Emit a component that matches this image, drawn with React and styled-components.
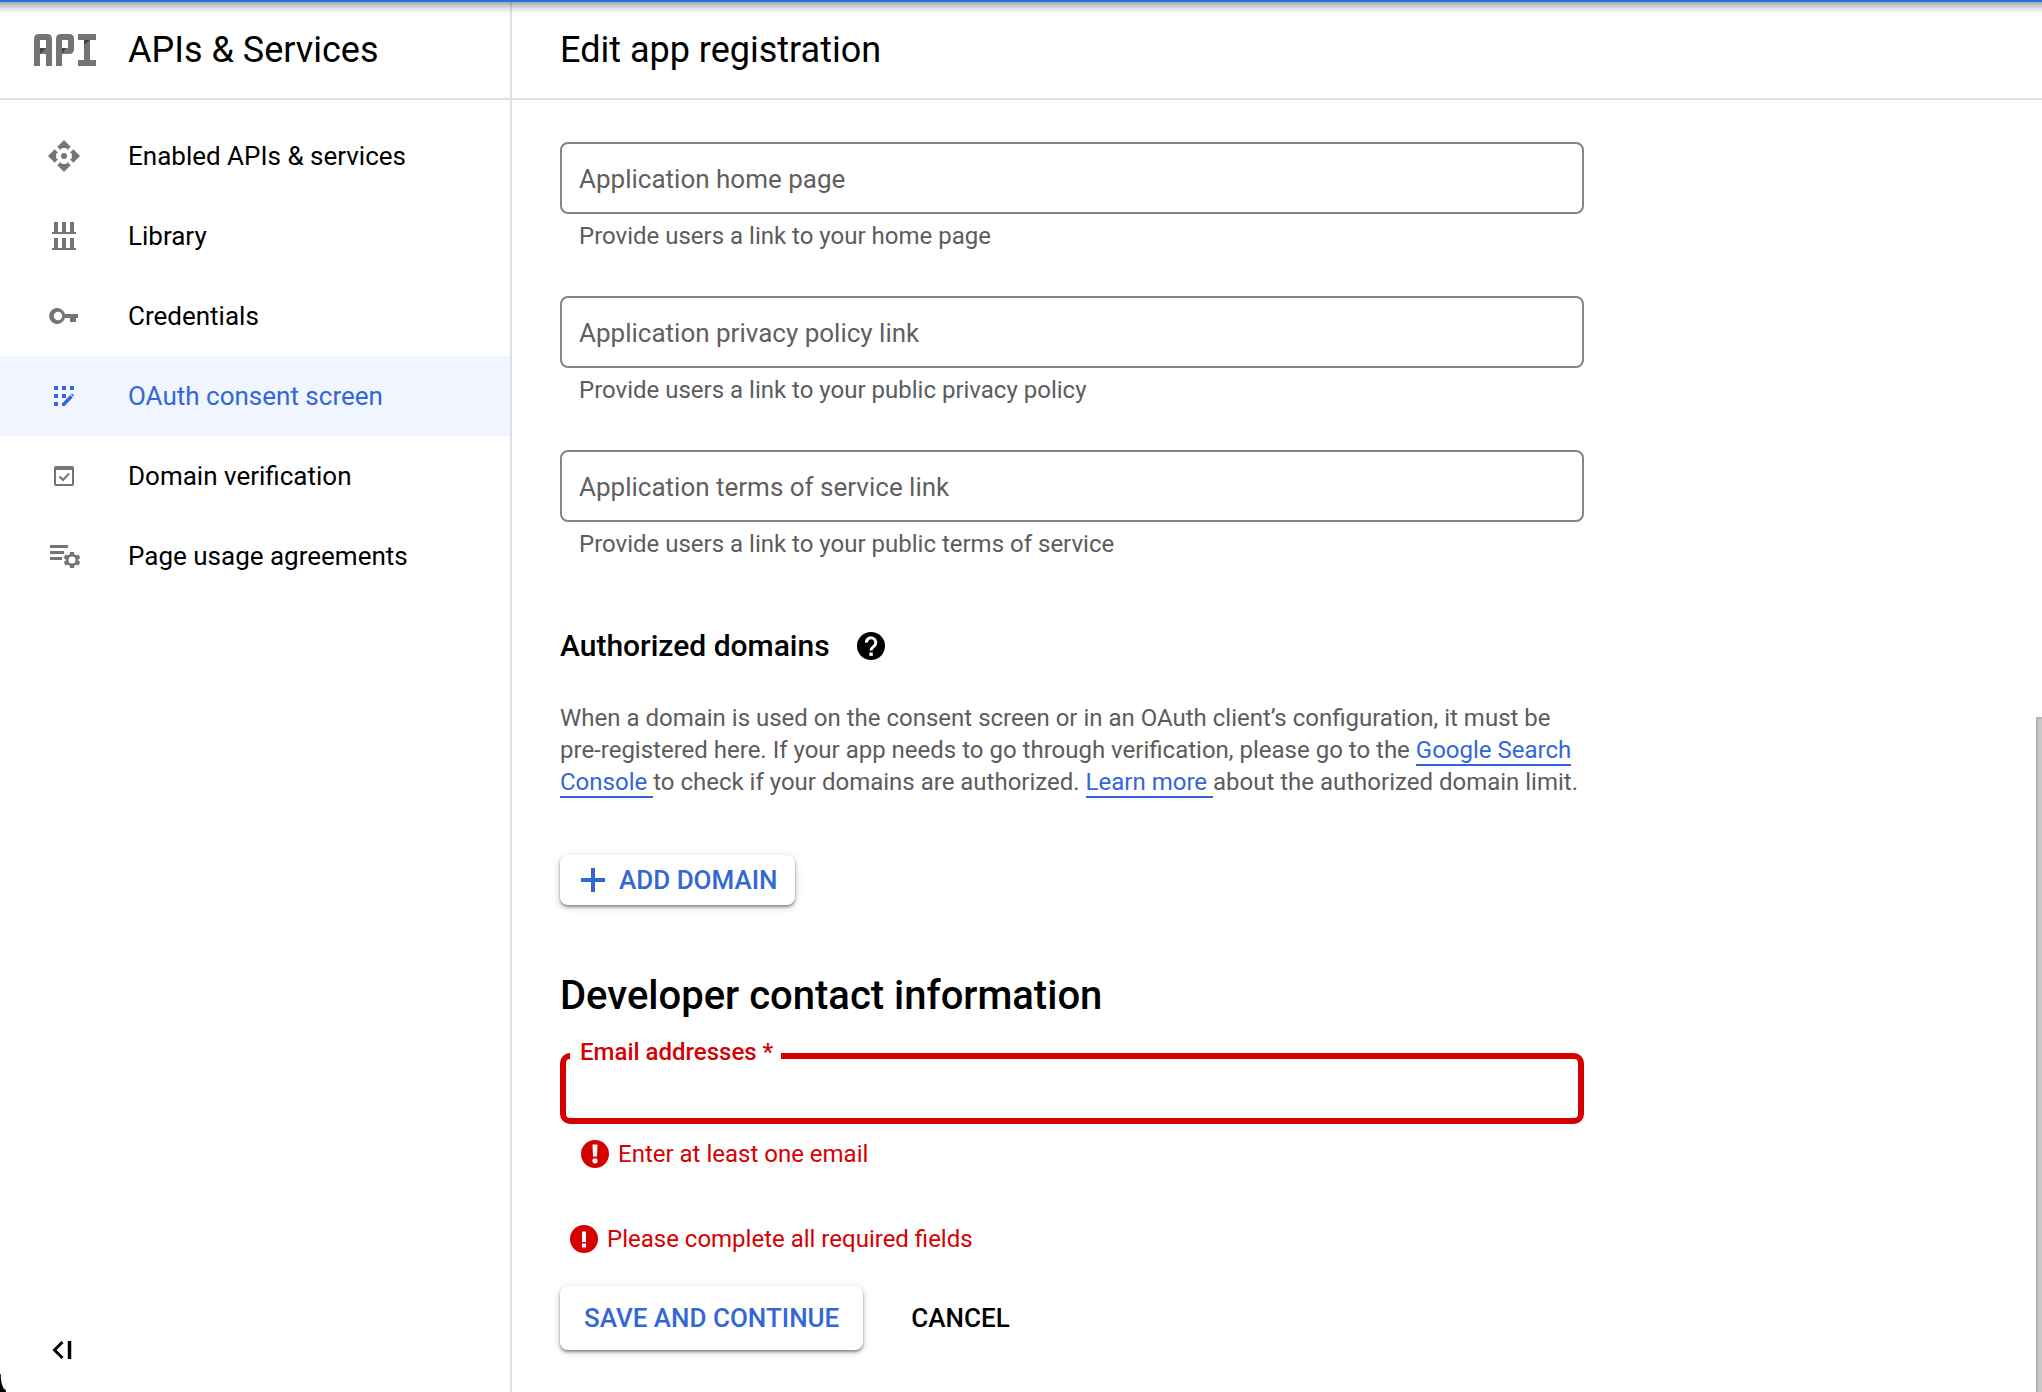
import React from 'react';
import styled, { createGlobalStyle } from 'styled-components';

const GlobalStyle = createGlobalStyle`
  *, *::before, *::after { box-sizing: border-box; }
  body {
    margin: 0;
    background: #fff;
    color: #000;
    font-family: Roboto, "Liberation Sans", sans-serif;
  }
  h1, h2, h3, p, ul { margin: 0; padding: 0; }
`;

const Page = styled.div`
  position: relative;
  display: flex;
  min-height: 100vh;
  overflow: hidden;
`;

const ProgressBar = styled.div`
  position: absolute;
  top: 0;
  left: 0;
  right: 0;
  z-index: 2;
  height: 16px;
  border-top: 2px solid #1a73e8;
  background: linear-gradient(
    rgba(0, 0, 0, 0.34),
    rgba(0, 0, 0, 0.22) 25%,
    rgba(0, 0, 0, 0.08) 55%,
    rgba(0, 0, 0, 0.02) 80%,
    transparent
  );
  pointer-events: none;
`;

const Sidebar = styled.aside`
  display: flex;
  flex-direction: column;
  flex: none;
  width: 512px;
  border-right: 2px solid #e0e0e0;
`;

const Header = styled.header`
  display: flex;
  align-items: center;
  height: 100px;
  padding-top: 2px;
  padding-left: ${(p) => p.$inset}px;
  border-bottom: 2px solid #e0e0e0;
`;

const Title = styled.h1`
  font-size: 36px;
  font-weight: 400;
  line-height: 48px;
`;

const LogoSlot = styled.span`
  display: flex;
  width: 94px;
`;

const NavList = styled.ul`
  display: flex;
  flex-direction: column;
  flex: 1;
  padding-top: 16px;
  list-style: none;
`;

const NavLink = styled.a`
  display: flex;
  align-items: center;
  gap: 48px;
  height: 80px;
  padding-left: 48px;
  font-size: 26px;
  line-height: 32px;
  text-decoration: none;
  color: ${(p) => (p.$active ? '#3367d6' : '#000')};
  background: ${(p) => (p.$active ? '#f0f5ff' : 'transparent')};

  svg {
    flex: none;
    color: ${(p) => (p.$active ? '#3367d6' : '#757575')};
  }
`;

const CollapseButton = styled.button`
  display: flex;
  align-self: flex-start;
  margin: 0 0 26px 46px;
  padding: 0;
  border: 0;
  background: none;
  color: #000;
`;

const Main = styled.main`
  flex: 1;
  min-width: 0;
`;

const Form = styled.form`
  display: flex;
  flex-direction: column;
  align-items: flex-start;
  max-width: 1072px;
  padding: 42px 0 32px 48px;
`;

const FieldGroup = styled.div`
  display: flex;
  flex-direction: column;
  gap: 44px;
  width: 100%;
`;

const Field = styled.div`
  display: flex;
  flex-direction: column;
  gap: 6px;
`;

const TextInput = styled.input`
  width: 100%;
  height: 72px;
  padding: 2px 17px 0;
  border: 2px solid #80868b;
  border-radius: 8px;
  background: transparent;
  font: inherit;
  font-size: 26px;
  outline: none;

  &::placeholder {
    color: #5f5f5f;
    opacity: 1;
  }
`;

const Hint = styled.p`
  padding-left: 19px;
  font-size: 24px;
  line-height: 32px;
  color: #5c5c5c;
`;

const SubHeading = styled.h3`
  display: flex;
  align-items: center;
  gap: 27px;
  margin-top: 66px;
  font-size: 30px;
  font-weight: 500;
  line-height: 40px;
`;

const Paragraph = styled.p`
  margin-top: 36px;
  font-size: 24px;
  line-height: 32px;
  color: #5c5c5c;
`;

const TextLink = styled.a`
  color: #3367d6;
  text-decoration: none;
  border-bottom: 2px solid #3367d6;
`;

const Button = styled.button`
  display: flex;
  align-items: center;
  gap: 10px;
  height: ${(p) => (p.$large ? 64 : 50)}px;
  padding: 0 ${(p) => (p.$large ? 24 : 17)}px;
  border: 0;
  border-radius: 8px;
  background: ${(p) => (p.$flat ? 'none' : '#fff')};
  box-shadow: ${(p) =>
    p.$flat ? 'none' : '0 2px 3px rgba(0, 0, 0, 0.4), 0 2px 8px rgba(0, 0, 0, 0.16)'};
  font: inherit;
  font-size: 26px;
  font-weight: 500;
  color: ${(p) => (p.$flat ? '#000' : '#3367d6')};
`;

const Actions = styled.div`
  display: flex;
  gap: 24px;
  margin-top: ${(p) => p.$space}px;
`;

const SectionHeading = styled.h2`
  margin-top: 63px;
  font-size: 40px;
  font-weight: 500;
  line-height: 56px;
`;

const RequiredField = styled.fieldset`
  width: 100%;
  height: 86px;
  min-width: 0;
  margin: 14px 0 0;
  padding: 0 14px;
  border: 6px solid #d50000;
  border-radius: 10px;
`;

const Legend = styled.legend`
  margin-left: -10px;
  padding: 0 8px 8px 10px;
  font-size: 24px;
  font-weight: 500;
  line-height: 28px;
  color: #d50000;
`;

const BareInput = styled.input`
  display: block;
  width: 100%;
  height: 44px;
  padding: 0;
  border: 0;
  outline: none;
  background: transparent;
  font: inherit;
  font-size: 26px;
`;

const ErrorMessage = styled.p`
  display: flex;
  align-items: center;
  gap: 9px;
  margin-top: ${(p) => p.$space}px;
  padding-left: ${(p) => p.$inset}px;
  font-size: 24px;
  line-height: 32px;
  color: #d50000;
`;

const ScrollThumb = styled.div`
  position: absolute;
  right: 0;
  bottom: 0;
  width: 6px;
  height: 675px;
  border: solid #b4b4b4;
  border-width: 2px 0 0 2px;
  background: #c8c8c8;
`;

const WindowCorner = styled.div`
  position: absolute;
  left: 0;
  bottom: 0;
  width: 6px;
  height: 18px;
  background: radial-gradient(ellipse 6px 18px at 100% 0, transparent 80%, #000 96%);
`;

const ApiLogo = () => (
  <svg width="62" height="32" viewBox="0 0 62 32" fill="#757575" aria-hidden="true">
    <path d="M0 32V5q0-5 5-5h8q5 0 5 5v27h-6V20H6v12zM6 14h6V6H6z" fillRule="evenodd" />
    <path d="M22 32V5q0-5 5-5h8q5 0 5 5v10q0 5-5 5h-7v12zM28 14h6V6h-6z" fillRule="evenodd" />
    <path d="M44 0h18v6h-6v20h6v6H44v-6h6V6h-6z" />
    <path d="M6 14h6l-6 6zM28 14h4l-4 6zM50 6h6l-6 5z" fill="#424242" />
  </svg>
);

const NavSvg = ({ children }) => (
  <svg width="32" height="32" viewBox="0 0 32 32" fill="currentColor" aria-hidden="true">
    {children}
  </svg>
);

const ApisIcon = () => (
  <NavSvg>
    <path d="M16 0l6.700 6.700-3.400 3.400-1-2h-4.600l-1 2-3.400-3.400zM16 32l6.700-6.700-3.400-3.400-1 2h-4.600l-1-2-3.400 3.400zM0 16l6.700-6.700 3.400 3.400-2 1v4.600l2 1-3.400 3.400zM32 16l-6.700-6.700-3.400 3.400 2 1v4.600l-2 1 3.400 3.400z" />
    <circle cx="16" cy="16" r="3" />
  </NavSvg>
);

const LibraryIcon = () => (
  <NavSvg>
    <path d="M6 2h4v10h4V2h4v10h4V2h4v10h2v2H4v-2h2zM6 18h4v10h4V18h4v10h4V18h4v10h2v2H4v-2h2z" />
  </NavSvg>
);

const KeyIcon = () => (
  <NavSvg>
    <path
      d="M16.900 14H30v4h-2v4h-6v-4h-5.100A8 8 0 1 1 16.900 14zM10 11.800a4.200 4.200 0 1 0 0 8.400 4.200 4.200 0 0 0 0-8.400z"
      fillRule="evenodd"
    />
  </NavSvg>
);

const ConsentIcon = () => (
  <NavSvg>
    <path d="M6 6h4v4H6zM14 6h4v4h-4zM22 6h4v4h-4zM6 14h4v4H6zM14 14h4v4h-4zM6 22h4v4H6zM14 26v-2.600l8.400-8.400 2.400 2.400-8.200 8.600zM23 14.300l1-1 2.300 2.300-1 1z" />
  </NavSvg>
);

const DomainIcon = () => (
  <NavSvg>
    <path
      d="M8 6h16a2 2 0 0 1 2 2v16a2 2 0 0 1-2 2H8a2 2 0 0 1-2-2V8a2 2 0 0 1 2-2zM8 10v14h16V10z"
      fillRule="evenodd"
    />
    <path d="M11.500 16.500l3.500 3.500 6-6.500" fill="none" stroke="currentColor" strokeWidth="2" />
  </NavSvg>
);

const AgreementsIcon = () => (
  <NavSvg>
    <path d="M2 5h18v3H2zM2 11h14v3H2zM2 17h12v3H2z" />
    <g transform="translate(24 20)">
      <path
        d="M-2-8h4l.5 2.500 1.400.8 2.400-.9 2 3.400-2 1.600v1.200l2 1.600-2 3.400-2.400-.9-1.400.8L2 8h-4l-.5-2.500-1.400-.8-2.400.9-2-3.400 2-1.600v-1.200l-2-1.600 2-3.400 2.400.9 1.400-.8zM0-3.500a3.500 3.500 0 1 0 0 7 3.500 3.500 0 0 0 0-7z"
        fillRule="evenodd"
      />
    </g>
  </NavSvg>
);

const HelpIcon = () => (
  <svg width="28" height="28" viewBox="0 0 28 28" aria-hidden="true">
    <circle cx="14" cy="14" r="14" fill="#000" />
    <path
      d="M9.400 10.600a4.700 4.700 0 1 1 7.600 3.600c-1.800 1.500-3 2-3 4.300"
      fill="none"
      stroke="#fff"
      strokeWidth="3"
    />
    <path d="M12.400 20.500h3.400v3.400h-3.400z" fill="#fff" />
  </svg>
);

const ErrorIcon = ({ tall }) => (
  <svg width="28" height="28" viewBox="0 0 28 28" aria-hidden="true">
    <circle cx="14" cy="14" r="14" fill="currentColor" />
    {tall ? (
      <g fill="#fff">
        <path d="M11.500 4.500h5l-.5 12h-4z" />
        <circle cx="14" cy="20.800" r="2.600" />
      </g>
    ) : (
      <path d="M12 6.500h4v10.500h-4zM12 18.500h4v4h-4z" fill="#fff" />
    )}
  </svg>
);

const PlusIcon = () => (
  <svg width="32" height="32" viewBox="0 0 32 32" fill="currentColor" aria-hidden="true">
    <path d="M14 4h4v10h10v4H18v10h-4V18H4v-4h10z" />
  </svg>
);

const CollapseIcon = () => (
  <svg width="32" height="32" viewBox="0 0 32 32" fill="none" stroke="#000" aria-hidden="true">
    <path d="M16.500 8l-8 8 8 8" strokeWidth="3" />
    <path d="M23.500 7v18" strokeWidth="3.500" />
  </svg>
);

const navItems = [
  { label: 'Enabled APIs & services', Icon: ApisIcon },
  { label: 'Library', Icon: LibraryIcon },
  { label: 'Credentials', Icon: KeyIcon },
  { label: 'OAuth consent screen', Icon: ConsentIcon, active: true },
  { label: 'Domain verification', Icon: DomainIcon },
  { label: 'Page usage agreements', Icon: AgreementsIcon },
];

const linkFields = [
  { id: 'home', label: 'Application home page', hint: 'Provide users a link to your home page' },
  {
    id: 'privacy',
    label: 'Application privacy policy link',
    hint: 'Provide users a link to your public privacy policy',
  },
  {
    id: 'terms',
    label: 'Application terms of service link',
    hint: 'Provide users a link to your public terms of service',
  },
];

export default function App() {
  return (
    <Page>
      <GlobalStyle />
      <ProgressBar />
      <Sidebar>
        <Header $inset={34}>
          <LogoSlot>
            <ApiLogo />
          </LogoSlot>
          <Title as="h2">APIs &amp; Services</Title>
        </Header>
        <NavList>
          {navItems.map(({ label, Icon, active }) => (
            <li key={label}>
              <NavLink href="#" $active={active} aria-current={active ? 'page' : undefined}>
                <Icon />
                {label}
              </NavLink>
            </li>
          ))}
        </NavList>
        <CollapseButton type="button" aria-label="Collapse menu">
          <CollapseIcon />
        </CollapseButton>
      </Sidebar>
      <Main>
        <Header $inset={48}>
          <Title>Edit app registration</Title>
        </Header>
        <Form onSubmit={(e) => e.preventDefault()}>
          <FieldGroup>
            {linkFields.map(({ id, label, hint }) => (
              <Field key={id}>
                <TextInput id={id} type="url" placeholder={label} aria-label={label} aria-describedby={`${id}-hint`} />
                <Hint id={`${id}-hint`}>{hint}</Hint>
              </Field>
            ))}
          </FieldGroup>
          <SubHeading>
            Authorized domains
            <HelpIcon />
          </SubHeading>
          <Paragraph>
            When a domain is used on the consent screen or in an OAuth client’s configuration, it must be
            pre-registered here. If your app needs to go through verification, please go to the{' '}
            <TextLink href="#">Google Search Console </TextLink>to check if your domains are authorized.{' '}
            <TextLink href="#">Learn more </TextLink>about the authorized domain limit.
          </Paragraph>
          <Actions $space={57}>
            <Button type="button">
              <PlusIcon />
              ADD DOMAIN
            </Button>
          </Actions>
          <SectionHeading>Developer contact information</SectionHeading>
          <RequiredField>
            <Legend>
              <label htmlFor="email">Email addresses *</label>
            </Legend>
            <BareInput id="email" type="email" aria-describedby="email-error" />
          </RequiredField>
          <ErrorMessage id="email-error" $inset={21} $space={14}>
            <ErrorIcon tall />
            Enter at least one email
          </ErrorMessage>
          <ErrorMessage $inset={10} $space={53}>
            <ErrorIcon />
            Please complete all required fields
          </ErrorMessage>
          <Actions $space={31}>
            <Button type="submit" $large>
              SAVE AND CONTINUE
            </Button>
            <Button type="button" $large $flat>
              CANCEL
            </Button>
          </Actions>
        </Form>
      </Main>
      <ScrollThumb />
      <WindowCorner />
    </Page>
  );
}
